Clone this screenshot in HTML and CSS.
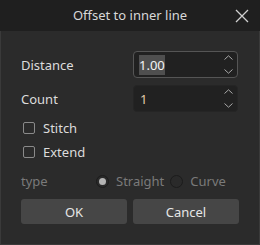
FILE: index.html
```html
<!DOCTYPE html>
<html>
<head>
<meta charset="utf-8">
<link rel="stylesheet" href="styles.css">
</head>
<body>
<div class="dialog">
  <div class="titlebar">
    <span class="title">Offset to inner line</span>
    <svg class="close" width="14" height="14" viewBox="0 0 14 14"><path d="M1 1L13 13M13 1L1 13" stroke="#d0d0d0" stroke-width="1.3" fill="none"/></svg>
  </div>
  <div class="content">
    <div class="field">
      <span class="label">Distance</span>
      <div class="spin focused">
        <span class="value"><span class="caret"></span><span class="sel">1.00</span></span>
        <div class="arrows">
          <svg width="9" height="5" viewBox="0 0 9 5"><path d="M0.5 4.5L4.5 0.8L8.5 4.5" stroke="#a8a8a8" stroke-width="1" fill="none"/></svg>
          <svg width="9" height="5" viewBox="0 0 9 5"><path d="M0.5 0.5L4.5 4.2L8.5 0.5" stroke="#a8a8a8" stroke-width="1" fill="none"/></svg>
        </div>
      </div>
    </div>
    <div class="field">
      <span class="label">Count</span>
      <div class="spin">
        <span class="value plain">1</span>
        <div class="arrows">
          <svg width="9" height="5" viewBox="0 0 9 5"><path d="M0.5 4.5L4.5 0.8L8.5 4.5" stroke="#a8a8a8" stroke-width="1" fill="none"/></svg>
          <svg width="9" height="5" viewBox="0 0 9 5"><path d="M0.5 0.5L4.5 4.2L8.5 0.5" stroke="#a8a8a8" stroke-width="1" fill="none"/></svg>
        </div>
      </div>
    </div>
    <div class="checks">
      <div class="check"><span class="box"></span><span>Stitch</span></div>
      <div class="check"><span class="box"></span><span>Extend</span></div>
    </div>
    <div class="typerow">
      <span class="tlabel">type</span>
      <div class="radios">
        <div class="radio"><span class="ring on"></span><span>Straight</span></div>
        <div class="radio"><span class="ring"></span><span>Curve</span></div>
      </div>
    </div>
    <div class="buttons">
      <button class="btn">OK</button>
      <button class="btn">Cancel</button>
    </div>
  </div>
</div>
</body>
</html>
```
FILE: styles.css
```css
html, body {
  margin: 0;
  padding: 0;
  background: #2b2b2b;
}
.dialog {
  width: 260px;
  height: 245px;
  box-sizing: border-box;
  border: 1px solid #3a3a3a;
  border-top: none;
  background: #2b2b2b;
  font-family: "Noto Sans", "Open Sans", sans-serif;
  font-size: 13px;
  color: #dcdcdc;
  display: flex;
  flex-direction: column;
}
.titlebar {
  height: 31px;
  background: #1f1f1f;
  margin: 0 -1px;
  position: relative;
  display: flex;
  align-items: center;
  justify-content: center;
}
.title {
  color: #d8d8d8;
  font-size: 13px;
  margin-top: -1px;
}
.close {
  position: absolute;
  right: 11px;
  top: 9px;
}
.content {
  padding: 20px 20px 0 20px;
  display: flex;
  flex-direction: column;
}
.field {
  display: flex;
  align-items: center;
  justify-content: space-between;
  height: 27px;
  margin-bottom: 7px;
}
.label {
  color: #dcdcdc;
}
.spin {
  width: 105px;
  height: 27px;
  box-sizing: border-box;
  background: #212121;
  border: 1px solid #252525;
  border-radius: 4px;
  display: flex;
  align-items: center;
  justify-content: space-between;
  margin-right: 1px;
}
.spin.focused {
  border-color: #555555;
}
.value {
  margin-left: 5px;
  display: flex;
  align-items: center;
  color: #e8e8e8;
}
.value.plain {
  margin-left: 6px;
  color: #e0c9a8;
}
.caret {
  width: 1px;
  height: 20px;
  background: #e0e0e0;
  margin-right: -1px;
}
.sel {
  background: #4f4f4f;
  color: #f4f4f4;
  padding: 1px 0;
  line-height: 18px;
}
.arrows {
  display: flex;
  flex-direction: column;
  justify-content: space-between;
  height: 19px;
  margin-right: 4px;
}
.arrows svg {
  display: block;
}
.checks {
  display: flex;
  flex-direction: column;
  margin-top: -3px;
}
.check {
  display: flex;
  align-items: center;
  height: 24px;
  margin-left: 2px;
}
.box {
  width: 12px;
  height: 12px;
  box-sizing: border-box;
  border: 1px solid #8a8a8a;
  border-radius: 2px;
  margin-right: 8px;
}
.typerow {
  display: flex;
  align-items: center;
  height: 26px;
  margin-top: 4px;
  color: #7a7a7a;
}
.tlabel {
  width: 75px;
}
.radios {
  display: flex;
  align-items: center;
}
.radio {
  display: flex;
  align-items: center;
  margin-right: 6px;
}
.ring {
  width: 13px;
  height: 13px;
  box-sizing: border-box;
  border-radius: 50%;
  border: 1px solid #1c1c1c;
  background: #2a2a2a;
  margin-right: 7px;
  display: flex;
  align-items: center;
  justify-content: center;
}
.ring.on::after {
  content: "";
  width: 7px;
  height: 7px;
  border-radius: 50%;
  background: #b4b4b4;
}
.buttons {
  display: flex;
  gap: 6px;
  margin-top: 5px;
}
.btn {
  flex: 1;
  height: 25px;
  border: none;
  border-radius: 3px;
  background: #464646;
  color: #e6e6e6;
  font-family: "Noto Sans", "Open Sans", sans-serif;
  font-size: 13px;
  padding: 0;
}
```
